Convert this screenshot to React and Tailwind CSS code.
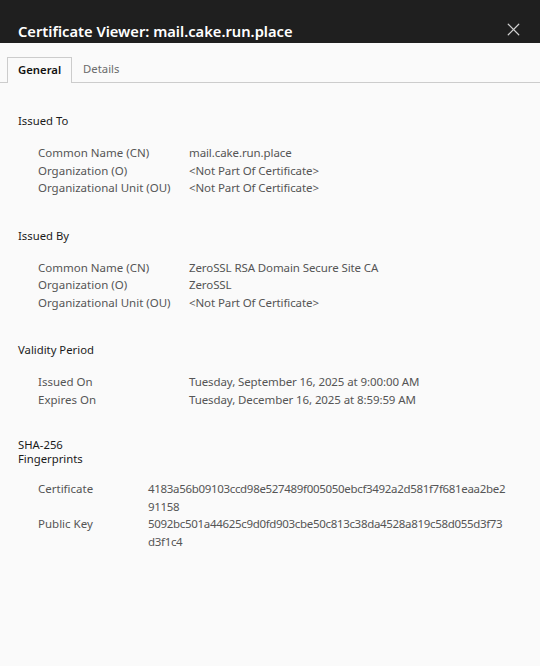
import { X } from 'lucide-react';

const sections = [
  {
    title: 'Issued To',
    rows: [
      ['Common Name (CN)', 'mail.cake.run.place'],
      ['Organization (O)', '<Not Part Of Certificate>'],
      ['Organizational Unit (OU)', '<Not Part Of Certificate>'],
    ],
  },
  {
    title: 'Issued By',
    rows: [
      ['Common Name (CN)', 'ZeroSSL RSA Domain Secure Site CA'],
      ['Organization (O)', 'ZeroSSL'],
      ['Organizational Unit (OU)', '<Not Part Of Certificate>'],
    ],
  },
  {
    title: 'Validity Period',
    rows: [
      ['Issued On', 'Tuesday, September 16, 2025 at 9:00:00 AM'],
      ['Expires On', 'Tuesday, December 16, 2025 at 8:59:59 AM'],
    ],
  },
];

const fingerprints = [
  ['Certificate', '4183a56b09103ccd98e527489f005050ebcf3492a2d581f7f681eaa2be2', '91158'],
  ['Public Key', '5092bc501a44625c9d0fd903cbe50c813c38da4528a819c58d055d3f73', 'd3f1c4'],
];

export default function App() {
  return (
    <div
      className="w-[540px] h-[666px] bg-[#fafafa] flex flex-col overflow-hidden"
      style={{ fontFamily: '"Noto Sans", "Open Sans", sans-serif' }}
    >
      {/* title bar */}
      <div className="h-[43px] bg-[#1f1f1f] flex items-end justify-between pl-[18px] pr-[16px] pb-[1px] shrink-0">
        <h1 className="text-white text-[14.7px] font-semibold leading-[22px]">
          Certificate Viewer: mail.cake.run.place
        </h1>
        <X className="text-[#d0d0d0] mb-[2px]" size={21} strokeWidth={1.4} />
      </div>

      {/* tabs */}
      <div className="mt-[14px] h-[26px] border-b border-[#cccccc] flex pl-[7px] shrink-0">
        <div className="h-[26px] px-[10px] border border-b-0 border-[#cccccc] bg-[#fafafa] flex items-center text-[11.3px] font-semibold text-[#111]">
          General
        </div>
        <div className="h-[25px] px-[11px] flex items-center text-[11.3px] text-[#6b6b6b]">
          Details
        </div>
      </div>

      {/* content */}
      <div className="pl-[18px] pt-[29px]">
        {sections.map((s) => (
          <div key={s.title} className="mb-[30px]">
            <h2 className="text-[11.3px] leading-[18px] text-[#1a1a1a]">{s.title}</h2>
            <div className="mt-[14px] pl-[20px]">
              {s.rows.map(([label, value]) => (
                <div key={label} className="flex text-[11.5px] leading-[17.5px] text-[#555555]">
                  <div className="w-[151px] shrink-0">{label}</div>
                  <div className="tracking-[-0.1px]">{value}</div>
                </div>
              ))}
            </div>
          </div>
        ))}

        <div>
          <h2 className="text-[11.3px] leading-[14px] text-[#1a1a1a]">
            SHA-256
            <br />
            Fingerprints
          </h2>
          <div className="mt-[14px] pl-[20px]">
            {fingerprints.map(([label, a, b]) => (
              <div key={label} className="flex text-[11.5px] leading-[17.5px] text-[#555555]">
                <div className="w-[110px] shrink-0">{label}</div>
                <div className="tracking-[-0.32px]">
                  <div>{a}</div>
                  <div>{b}</div>
                </div>
              </div>
            ))}
          </div>
        </div>
      </div>
    </div>
  );
}
